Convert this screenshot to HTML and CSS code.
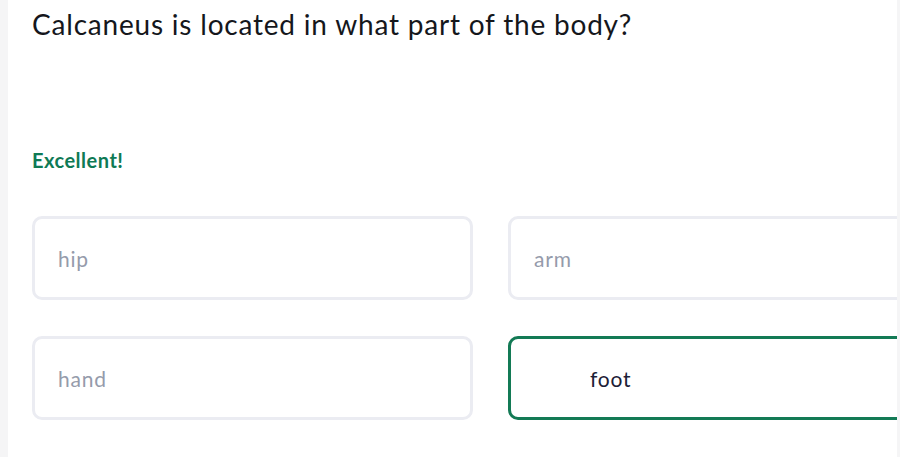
FILE: index.html
```html
<!doctype html>
<html lang="en">
<head>
    <meta charset="UTF-8">
    <meta name="viewport" content="width=device-width, initial-scale=1.0">
    <title>Quiz</title>
    <link rel="stylesheet" href="styles.css">
</head>
<body>
<main class="panel">
    <h1 class="question">Calcaneus is located in what part of the body?</h1>

    <p class="feedback">Excellent!</p>

    <div class="answers">
        <button class="answer">hip</button>
        <button class="answer">arm</button>
        <button class="answer">hand</button>
        <button class="answer correct">foot</button>
    </div>
</main>
</body>
</html>
```

FILE: styles.css
```css
body {
    margin: 0;
    height: 457px;
    overflow: hidden;
    background: #f5f5f6;
    font-family: Lato, "Open Sans", sans-serif;
}

.panel {
    margin-left: 8px;
    width: 889px;
    height: 457px;
    background: #fff;
    overflow: hidden;
    padding: 0 0 0 24px;
    box-sizing: border-box;
}

.question {
    margin: 0;
    padding-top: 6px;
    font-size: 28px;
    font-weight: 400;
    letter-spacing: 0.8px;
    line-height: 36px;
    color: #15171c;
}

.feedback {
    margin: 106px 0 0;
    font-size: 20px;
    font-weight: 700;
    letter-spacing: 0.5px;
    line-height: 24px;
    color: #0f7a55;
}

.answers {
    margin-top: 44px;
    display: grid;
    grid-template-columns: 441px 441px;
    column-gap: 35px;
    row-gap: 36px;
}

.answer {
    height: 84px;
    border: 3px solid #ebecf2;
    border-radius: 10px;
    background: #fff;
    text-align: left;
    padding: 0 0 0 23px;
    font-family: inherit;
    font-size: 21px;
    font-weight: 400;
    letter-spacing: 0.8px;
    color: #959bab;

    &.correct {
        border-color: #137a55;
        padding-left: 79px;
        color: #1c2036;
    }
}
```
